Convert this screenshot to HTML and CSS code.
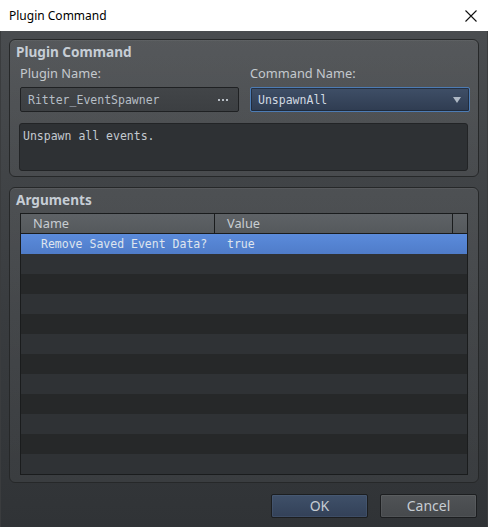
FILE: index.html
```html
<!DOCTYPE html>
<html>
<head>
<meta charset="utf-8">
<link rel="stylesheet" href="styles.css">
</head>
<body>
<div class="window">
  <div class="titlebar">
    <span class="title">Plugin Command</span>
    <svg class="close" width="12" height="12" viewBox="0 0 12 12"><path d="M0.5 0.5 L11.5 11.5 M11.5 0.5 L0.5 11.5" stroke="#111" stroke-width="1.1" fill="none"/></svg>
  </div>
  <div class="content">
    <div class="group group-cmd">
      <div class="group-title">Plugin Command</div>
      <div class="fields">
        <div class="field">
          <div class="label">Plugin Name:</div>
          <div class="input"><span class="mono">Ritter_EventSpawner</span><span class="dots"><i></i><i></i><i></i></span></div>
        </div>
        <div class="field">
          <div class="label">Command Name:</div>
          <div class="select"><span class="mono">UnspawnAll</span><span class="arrow"></span></div>
        </div>
      </div>
      <div class="desc mono">Unspawn all events.</div>
    </div>
    <div class="group group-args">
      <div class="group-title">Arguments</div>
      <div class="table">
        <div class="thead">
          <div class="th th-name">Name</div>
          <div class="th th-value">Value</div>
          <div class="th th-end"></div>
        </div>
        <div class="tbody">
          <div class="row selected"><div class="td td-name mono">Remove Saved Event Data?</div><div class="td td-value mono">true</div></div>
          <div class="row"></div>
          <div class="row"></div>
          <div class="row"></div>
          <div class="row"></div>
          <div class="row"></div>
          <div class="row"></div>
          <div class="row"></div>
          <div class="row"></div>
          <div class="row"></div>
          <div class="row"></div>
          <div class="row"></div>
        </div>
      </div>
    </div>
    <div class="buttons">
      <div class="btn btn-ok">OK</div>
      <div class="btn btn-cancel">Cancel</div>
    </div>
  </div>
</div>
</body>
</html>
```

FILE: styles.css
```css
* { box-sizing: border-box; }
html, body { margin: 0; padding: 0; }
body { width: 488px; height: 527px; overflow: hidden; background: #303336; }
.window {
  width: 488px; height: 527px;
  display: flex; flex-direction: column;
  background: linear-gradient(#4b4e51, #393c3f 60%, #303336);
  border-left: 1px solid #3a3c3e;
  border-right: 1px solid #3a3c3e;
}
.titlebar {
  height: 31px; flex: none;
  background: #fff;
  display: flex; align-items: center; justify-content: space-between;
  padding: 0 10px 0 9px;
  margin: 0 -1px;
}
.title { font-family: "Noto Sans", "Open Sans", sans-serif; font-size: 12px; color: #000; }
.close { margin-right: 1px; }
.content {
  flex: 1;
  display: flex; flex-direction: column;
  padding: 8px 8px 0 8px;
}
.mono { font-family: "DejaVu Sans Mono", "Liberation Mono", monospace; font-size: 11.5px; }
.group {
  border: 1px solid #262829;
  border-radius: 6px;
  background: linear-gradient(rgba(255,255,255,0.07), rgba(255,255,255,0.04));
  box-shadow: inset 0 1px 0 rgba(255,255,255,0.05);
  padding: 3px 10px 6px 10px;
}
.group-title {
  font-family: "Noto Sans", "Open Sans", sans-serif;
  font-weight: bold; font-size: 13.6px; line-height: 18px;
  color: #c6cdd5;
  margin-left: -4px;
}
.group-cmd { height: 138px; }
.fields { display: grid; grid-template-columns: 219px 220px; column-gap: 11px; }
.label {
  font-family: "Noto Sans", "Open Sans", sans-serif;
  font-size: 12.8px; line-height: 16px; color: #c4c9ce;
  margin: 4px 0 6px 0;
}
.input, .select {
  height: 25px;
  display: flex; align-items: center; justify-content: space-between;
  padding: 0 7px 0 7px;
  border-radius: 2px;
}
.input {
  border: 1px solid #1f2123;
  background: linear-gradient(#424548, #3c3f42);
  color: #b6bec6;
}
.dots { display: flex; gap: 2px; margin-right: 3px; padding-top: 1px; }
.dots i { display: block; width: 2px; height: 2px; background: #b8bec5; }
.select {
  border: 1px solid #4d7cb4;
  background: linear-gradient(#3f4f67, #2f3c51);
  color: #d2dae2;
  box-shadow: inset 0 0 0 1px rgba(20,30,45,0.6);
}
.arrow {
  width: 0; height: 0;
  border-left: 4px solid transparent; border-right: 4px solid transparent;
  border-top: 6px solid #aeb8c4;
  margin-right: 1px;
}
.desc {
  margin-top: 11px;
  height: 48px;
  margin-left: -1px;
  border: 1px solid #222426;
  border-radius: 3px;
  background: #2e3134;
  color: #c4cad0;
  padding: 5px 3px;
  line-height: 14px;
}
.group-args {
  margin-top: 10px;
  height: 296px;
}
.table {
  margin-top: 4px;
  border: 1px solid #1a1c1d;
  display: flex; flex-direction: column;
}
.thead {
  height: 20px;
  display: flex;
  background: linear-gradient(#5e6266, #55595c);
  border-bottom: 1px solid #1a1c1d;
}
.th {
  font-family: "Noto Sans", "Open Sans", sans-serif;
  font-size: 12.8px; line-height: 19px; color: #c8cdd2;
}
.th-name { width: 194px; padding-left: 12px; border-right: 1px solid #1a1c1d; }
.th-value { width: 238px; padding-left: 12px; border-right: 1px solid #1a1c1d; }
.th-end { flex: 1; }
.tbody { display: flex; flex-direction: column; }
.row { height: 20px; display: flex; background: #262829; }
.row:nth-child(even) { background: #2f3235; }
.row.selected { background: linear-gradient(#5b8bdb, #4f7cc9); }
.td { line-height: 20px; color: #dfe5ee; }
.td-name { width: 206px; padding-left: 20px; }
.td-value { padding-left: 0px; }
.buttons {
  display: flex; justify-content: flex-end; gap: 12px;
  margin-top: 11px;
  padding-right: 2px;
}
.btn {
  width: 97px; height: 24px;
  border: 1px solid #1c1e20;
  border-radius: 2px;
  font-family: "Noto Sans", "Open Sans", sans-serif;
  font-size: 14px; line-height: 22px;
  text-align: center; color: #c6ccd3;
}
.btn-ok { background: linear-gradient(#3f5069, #334158); box-shadow: inset 0 0 0 1px rgba(90,110,140,0.25); }
.btn-cancel { background: linear-gradient(#505356, #46494c); box-shadow: inset 0 0 0 1px rgba(255,255,255,0.06); }
```
